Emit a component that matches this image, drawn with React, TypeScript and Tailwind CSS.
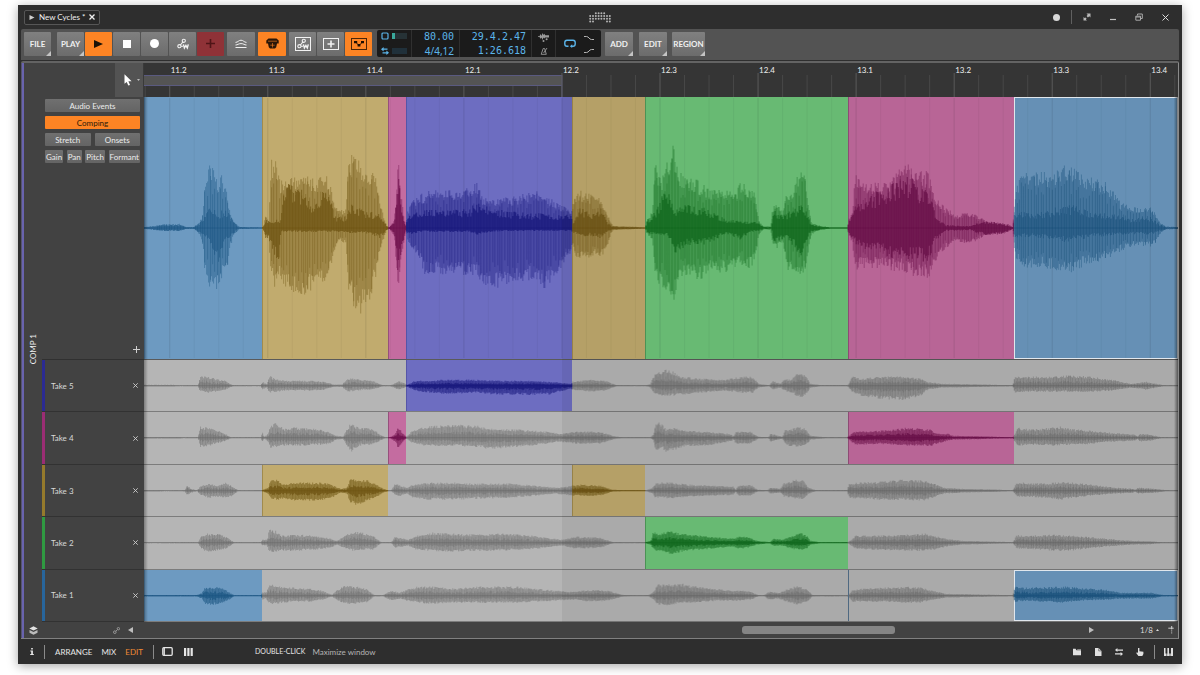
import React from "react";

type Tone = "blue" | "gold" | "pink" | "violet" | "green";
type Point = [number, number, number];

const START = 144;
const SPAN = 1033;
const EDGES = [144, 262, 388, 406, 572, 645, 847, 1013, 1177];
const MAIN_TONES: Tone[] = ["blue", "gold", "pink", "violet", "gold", "green", "pink", "blue"];

const CLIP_BG: Record<Tone, string> = {
  blue: "bg-[#6d9ac1] shadow-[inset_1px_0_#5583aa]",
  gold: "bg-[#c1ab6e] shadow-[inset_1px_0_#a18b4d]",
  pink: "bg-[#c46ca0] shadow-[inset_1px_0_#96507c]",
  violet: "bg-[#6d6dc1] shadow-[inset_1px_0_#5555a8]",
  green: "bg-[#6fc67b] shadow-[inset_1px_0_#509c5b]",
};
const INK: Record<Tone | "gray", string> = {
  blue: "#17527f",
  gold: "#6c5210",
  pink: "#6b0d49",
  violet: "#16167a",
  green: "#0f6b1c",
  gray: "#636363",
};
const CORE: Record<Tone | "gray", number> = { blue: 0.5, gold: 0.72, pink: 0.74, violet: 0.74, green: 0.74, gray: 0.36 };

// "x,up,down" triples; when down is missing the envelope is symmetric.
const parse = (s: string): Point[] =>
  s.trim().split(/\s+/).map((t) => {
    const [x, u, d] = t.split(",").map(Number);
    return [x, u, d === undefined ? u : d];
  });

const MAIN_OUTER = parse(`144,1 155,2 165,4,3 180,4,3 186,1 194,1 200,7 203,15,20 205,54,45 209,61,60 214,58,60 218,46,62 222,52,50 227,34,44 230,16,22 233,7 240,1 261,.6
263,1 266,14,12 269,6,8 270,62,48 275,74,57 279,48,44 283,46,54 290,50,64 300,50,66 310,50,62 320,48,52 325,54,54 330,44,44 334,28,28 338,16,12 346,20,15 348,64,60 354,80,80 360,66,82 370,58,68 376,52,48 380,24,22 385,6 387,1
389,.5 394,8 396,32,34 398,72,66 401,32,28 404,10,12 406,1
407,16,12 413,28,22 420,33,32 424,32,45 435,40,45 445,36,46 460,36,46 477,44,47 482,30,56 495,29,58 510,30,52 525,33,52 533,38,50 545,32,59 555,26,46 565,20,32 571,18,26
572,20,16 574,32,26 580,36,32 590,32,29 600,28,28 605,20,24 610,6,7 613,2 630,1.5 645,.6
647,9,7 652,16,12 655,68,48 658,54,54 663,50,58 668,70,68 672,84,72 676,60,64 682,50,48 690,50,47 700,44,50 712,36,42 725,40,43 735,34,39 740,46,37 750,39,39 755,33,30 758,8 763,1.5 770,2 772,20,16 777,28,20 782,14,12 785,34,28 787,30,44 793,38,40 799,60,51 805,48,40 808,22 811,5,6 820,2 830,.6 847,.6
848,8 852,15 854,54,44 860,46,38 870,46,39 880,42,38 890,48,41 900,58,41 908,62,45 918,56,48 928,54,50 934,33,33 940,24 948,18 955,12 965,15,16 975,13 985,7 1000,5,6 1008,4 1012,1
1014,34,30 1020,54,38 1032,56,38 1048,54,39 1065,62,44 1080,53,39 1092,48,34 1100,46,32 1112,40,28 1120,24,22 1130,21,18 1140,20,17 1150,21,18 1155,13,14 1160,5 1165,1.5 1177,1`);

const MAIN_INNER = parse(`144,1 165,3 180,3 186,1 194,1 203,8 210,22,15 218,14,34 225,20,14 231,11,9 238,1 261,.6
263,1 266,11,10 270,5,14 278,9,36 281,8,5 283,43,4 295,42,4 305,38,4 310,25,4 325,40,4 330,33,4 334,11,4 346,11,4 350,24,5 365,17,5 380,13,10 387,2
389,.5 394,7 396,24 398,52,46 401,24 404,8,9 406,1
407,12,7 420,17,4 440,19,4 455,18,4 470,19,4 477,26,7 490,20,4 505,17,3 530,14,3 545,14,3 550,12,3 571,13,3
572,4 580,20,8 590,14,8 600,20,10 607,6,4 612,1.5 645,.6
647,8,6 655,16,6 662,32,7 668,36,9 675,20,30 685,24,17 695,21,16 705,20,16 715,14,12 725,9,5 740,7,12 750,6,4 757,6,3 763,1 771,1 773,17,14 780,14,12 785,14,8 800,22,28 806,16,12 810,4 818,2 830,.6 847,.6
848,6 855,22,17 865,28,22 880,38,22 890,43,31 905,54,32 920,38,32 928,38,32 935,12 945,3 970,2 976,5 985,7 1000,5,6 1012,1
1014,17,9 1030,14,9 1050,17,11 1062,24,14 1080,20,12 1092,16,9 1110,14,7 1130,9,6 1150,11,7 1158,4 1165,1 1177,1`);

const TAKES: { name: string; bar: string; lit: Partial<Record<number, Tone>>; wave: Point[] }[] = [
  {
    name: "Take 5", bar: "bg-[#2b2b93]", lit: { 3: "violet" },
    wave: parse(`144,.9 174,.9 175,.5 198,.6 200,9,6 208,9,7 215,7,6 225,5,4 233,.6 261,.5 262,4 267,2 269,10,7 275,7,6 285,5,5 310,5,5 325,4 333,1.2 342,1.2 347,7,6 355,8,5 363,6,4 372,5,4 382,.8 390,.5 394,2 398,5,4 405,2 407,1 415,5,5 430,5,7 445,6,8 475,6,7 500,5,9 530,5,9 548,4,9 560,3,6 571,2,3 572,4 592,6 605,5 616,.6 646,.5 650,2 653,10,8 663,16,10 672,14,10 680,9 700,7 725,6,5 740,9,7 752,9,7 758,2 769,.6 772,5,4 780,2 784,7,5 790,6,7 798,13,11 804,11,11 810,2 820,.6 847,.6 848,2 852,10,7 860,7,10 880,9,13 903,9,14 920,7,10 927,4 940,2 970,1.5 1012,.6 1014,9,7 1025,9,6 1045,9,6 1070,10,6 1090,9,6 1110,6,5 1130,2 1145,4 1155,2 1163,.6 1177,.6`),
  },
  {
    name: "Take 4", bar: "bg-[#9b2d74]", lit: { 2: "pink", 6: "pink" },
    wave: parse(`144,.8 180,.8 182,.5 198,.6 200,11,9 207,10,9 215,8,6 223,5,4 231,.6 261,.6 262,6,5 264,1 268,4,4 270,13,10 276,14,9 284,9,8 295,10,8 320,9,7 330,5,6 336,2 343,1.2 346,7,7 351,15,14 356,11,11 362,10,7 372,9,7 380,3 385,.6 390,.6 395,4 398,11,10 402,5 406,1 412,7,5 425,11,8 450,13,8 475,12,9 490,9,11 520,8,9 545,6,6 560,4,4 576,6,6 600,6,6 612,2 620,.6 650,.6 653,3 655,16,13 661,14,10 666,8,14 675,10,12 685,7,8 705,6,8 728,4 732,3 733,1 735,6 750,6,6 758,1 768,.6 770,4 782,1 784,8,6 790,8,9 797,11,9 804,9,9 810,2 825,.6 847,.6 852,5,5 855,6,7 880,7,6 908,10,8 930,8,8 936,4,6 947,4,3 952,2 980,1.4 1012,.6 1015,6,6 1017,10,8 1030,8,7 1062,11,8 1075,8,7 1090,7,6 1110,5,4 1135,3 1136,1 1139,4 1150,3 1160,.6 1177,.6`),
  },
  {
    name: "Take 3", bar: "bg-[#957a2c]", lit: { 1: "gold", 4: "gold" },
    wave: parse(`144,.8 162,.8 164,.5 182,.6 185,1 187,6,5 191,2 197,.6 201,5,5 209,7,7 218,5,6 226,8,7 233,4,5 238,.6 262,.6 268,3 271,12,9 278,11,9 283,7,8 295,8,10 310,8,10 325,8,9 334,5,6 340,2 347,3 350,13,12 357,11,14 368,10,10 377,6,6 383,2 388,.6 391,.6 395,7,4 398,6,6 404,4 407,3 412,6,7 430,8,9 455,8,9 475,7,8 510,7,7 535,5,5 555,3 565,4 572,5 580,6,5 600,5,5 612,1 622,.6 646,.6 652,3 655,7,7 664,9,7 672,8,8 690,6,6 715,5,5 733,4 735,1 738,5 750,6,5 757,1 767,.6 770,3 780,2 783,8,6 797,11,8 803,10,8 808,3 815,.6 847,.6 848,7 855,8,8 880,9,9 903,11,9 925,10,10 934,7,6 943,3 960,2 985,1.5 1012,.6 1016,8,6 1022,8,6 1045,7,7 1060,9,9 1072,8,7 1090,6,5 1115,3 1133,2 1134,1 1137,3 1155,2 1165,.6 1177,.6`),
  },
  {
    name: "Take 2", bar: "bg-[#2f9a41]", lit: { 5: "green" },
    wave: parse(`144,.5 198,.6 201,6,6 207,9,9 217,9,8 226,6,6 234,.6 261,.6 262,3 267,3 269,13,9 275,12,9 282,7,8 295,8,8 315,7,7 330,4,5 337,2 343,6,5 352,11,8 362,10,7 373,7,7 381,.6 391,.6 395,6,5 404,4 408,3 416,7,7 433,10,8 450,9,9 475,8,8 500,9,8 525,8,7 545,5,5 562,3 575,6 600,5 613,.6 630,.5 645,.6 650,2 653,11,7 660,9,9 670,12,12 680,9,9 700,7,7 720,5 733,4 738,6 748,6,5 756,2 769,.6 773,4,3 782,3 790,6,6 799,10,7 805,8,7 810,2 820,.6 847,.6 852,4 855,7,6 875,7,7 903,8,8 925,9,8 933,7,7 945,4 960,2 980,1.5 1012,.6 1016,8,6 1025,7,6 1055,8,8 1068,7,8 1085,6,6 1105,4 1130,2 1150,1.5 1160,.6 1177,.6`),
  },
  {
    name: "Take 1", bar: "bg-[#28659b]", lit: { 0: "blue", 7: "blue" },
    wave: parse(`144,.8 197,.8 202,3,3 205,9,8 213,9,9 222,8,8 228,4,5 234,.6 261,.6 262,4 266,3 269,11,8 277,10,8 290,8,6 310,7,6 322,5,4 332,1 336,5,4 344,10,8 356,9,8 366,7,7 374,.8 383,.6 388,4 393,5 399,3 407,6,5 418,9,7 430,9,8 455,7,7 480,9,7 515,9,7 535,7,6 555,5 572,4 592,6 608,5 622,1 630,.6 648,.6 653,4 657,11,9 665,11,10 680,12,7 695,9,7 715,7,5 730,5 740,5,5 750,4 758,.6 764,.6 768,4 778,3 786,6,6 797,10,9 805,7,7 812,.8 847,.6 852,6 860,7,6 880,8,6 905,9,7 920,8,7 932,5,4 945,2 970,1.5 1012,.6 1014,9,6 1025,8,5 1063,9,7 1080,8,5 1105,6,4 1120,3 1135,3 1150,3 1162,.8 1177,.6`),
  },
];

const noise = (n: number) => {
  const v = Math.sin(n * 127.1 + 311.7) * 43758.5453;
  return v - Math.floor(v);
};

function sample(points: Point[], x: number): [number, number] {
  if (x <= points[0][0]) return [points[0][1], points[0][2]];
  for (let i = 1; i < points.length; i++) {
    if (x <= points[i][0]) {
      const [x0, u0, d0] = points[i - 1];
      const [x1, u1, d1] = points[i];
      const t = x1 === x0 ? 1 : (x - x0) / (x1 - x0);
      return [u0 + (u1 - u0) * t, d0 + (d1 - d0) * t];
    }
  }
  const last = points[points.length - 1];
  return [last[1], last[2]];
}

function body(points: Point[], from: number, to: number, mid: number, rough: number, seed: number, gain = 1) {
  const top: string[] = [];
  const bottom: string[] = [];
  for (let x = from; x < to; x++) {
    const [u, d] = sample(points, x + 0.5);
    const a = u * gain * (1 - rough * noise(x + seed));
    const b = d * gain * (1 - rough * noise(x * 1.7 + seed + 9));
    const l = x - START;
    top.push(`L${l} ${(mid - a).toFixed(1)}L${l + 1} ${(mid - a).toFixed(1)}`);
    bottom.push(`L${l + 1} ${(mid + b).toFixed(1)}L${l} ${(mid + b).toFixed(1)}`);
  }
  return `M${from - START} ${mid}${top.join("")}${bottom.reverse().join("")}Z`;
}

function stripes(points: Point[], from: number, to: number, mid: number, seed: number) {
  let d = "";
  for (let x = from; x < to; x += noise(x + seed) > 0.35 ? 3 : 2) {
    const [u, w] = sample(points, x + 0.5);
    if (u < 2) continue;
    const l = x - START + 0.5;
    const k = 0.55 + 0.42 * noise(x * 3 + seed);
    d += `M${l} ${(mid - u * k).toFixed(1)}V${(mid + w * (k + 0.03)).toFixed(1)}`;
  }
  return d;
}

function Waves({ outer, inner, tones, height, seed }: {
  outer: Point[]; inner?: Point[]; tones: (Tone | "gray")[]; height: number; seed: number;
}) {
  const mid = height / 2;
  return (
    <svg className="pointer-events-none absolute inset-0 h-full w-full" viewBox={`0 0 ${SPAN} ${height}`} preserveAspectRatio="none" aria-hidden="true">
      {tones.map((tone, i) => {
        const a = EDGES[i];
        const b = EDGES[i + 1];
        const soft = tone === "gray" ? 0.4 : inner ? 0.4 : 0.52;
        return (
          <g key={i} fill={INK[tone]} stroke="none">
            <path d={body(outer, a, b, mid, inner ? 0.3 : 0.26, seed, 1.05)} opacity={soft} />
            <path d={stripes(outer, a, b, mid, seed)} fill="none" stroke={INK[tone]} strokeWidth={1} opacity={inner ? 0.34 : 0.24} />
            <path
              d={inner ? body(inner, a, b, mid, 0.45, seed + 50, 1.05) : body(outer, a, b, mid, 0.5, seed + 50, 0.5)}
              opacity={inner || tone !== "blue" ? CORE[tone] : 0.62}
            />
            <path d={`M${a - START} ${mid}H${b - START}`} stroke={INK[tone]} strokeWidth={0.8} opacity={0.6} />
          </g>
        );
      })}
    </svg>
  );
}

const BEATS = ["11.2", "11.3", "11.4", "12.1", "12.2", "12.3", "12.4", "13.1", "13.2", "13.3", "13.4"];
const TICKS = Array.from({ length: 43 }, (_, i) => ({ x: 25.7 + (i - 1) * 24.49, beat: (i - 1) % 4 === 0 }));
const LOOP_END = 417.5;

const TOOL = "relative flex h-6 shrink-0 items-center justify-center rounded-[1px] bg-gradient-to-b from-[#808080] to-[#6c6c6c] text-[8px] font-bold leading-none text-[#f0f0f0]";
const HOT = "relative flex h-6 shrink-0 items-center justify-center rounded-[1px] bg-[#fd8424] text-[#1c1c1c]";
const SMALL = "flex h-[13px] items-center justify-center rounded-[1px] bg-gradient-to-b from-[#707070] to-[#646464] text-[8px] leading-none text-[#ececec]";

const Corner = () => (
  <svg className="absolute bottom-0 right-0 h-[5px] w-[5px]" viewBox="0 0 5 5" aria-hidden="true"><path d="M5 0V5H0Z" fill="#c4c4c4" /></svg>
);

function Automation({ boxed = false }: { boxed?: boolean }) {
  return (
    <svg className="h-4 w-4" viewBox="0 0 16 16" fill="none" stroke="#f2f2f2" aria-hidden="true">
      {boxed && <rect x=".5" y="1.5" width="15" height="13" strokeWidth="1" />}
      <g strokeWidth="1.1">
        <circle cx="4.4" cy="10.2" r="1.6" />
        <circle cx="8.8" cy="4.8" r="1.6" />
        <path d="M5.4 9 7.8 6.2M6 10.2 8 10.2" />
        <path d="M8.4 8.4 9.4 12 10.9 9.4 12.3 12 13.3 8.4" strokeWidth="1.4" />
      </g>
    </svg>
  );
}

function TitleBar() {
  const dots = ["..xxxx..", "xxxxxxxx", "xxxxxxxx", "xx....xx"];
  return (
    <header className="grid h-6 shrink-0 grid-cols-3 items-center px-[6px]">
      <div className="flex">
        <div className="flex h-[15px] items-center gap-1 rounded-[2px] border border-[#565656] bg-[#282828] px-1">
          <svg className="h-[5px] w-[6px]" viewBox="0 0 6 5" aria-hidden="true"><path d="M.5 0 5.5 2.5 .5 5Z" fill="#cfcfcf" /></svg>
          <span className="text-[8px] leading-none text-[#f0f0f0]">New Cycles *</span>
          <button aria-label="Close project" className="flex">
            <svg className="h-[6px] w-[6px]" viewBox="0 0 6 6" stroke="#f0f0f0" strokeWidth="1.3" aria-hidden="true"><path d="M.5 .5 5.5 5.5M5.5 .5 .5 5.5" /></svg>
          </button>
        </div>
      </div>
      <div className="flex justify-center">
        <svg className="h-[11px] w-[22px]" viewBox="0 0 22 11" fill="#b4b4b4" aria-hidden="true">
          {dots.flatMap((row, y) => row.split("").map((c, x) => (c === "x" ? <circle key={`${x}-${y}`} cx={1.2 + x * 2.8} cy={1.2 + y * 2.8} r="1" /> : null)))}
        </svg>
      </div>
      <div className="flex items-center justify-end gap-[11px] pr-1">
        <span className="h-[7px] w-[7px] rounded-full bg-[#d8d8d8]" />
        <span className="h-[14px] w-px bg-[#606060]" />
        <button aria-label="Toggle full screen" className="flex w-2 justify-center">
          <svg className="h-2 w-2" viewBox="0 0 8 8" fill="#b8b8b8" aria-hidden="true"><path d="M3.5 .5H7.5V4.5L6.3 3.3 4.9 4.4 3.6 3.1 4.7 1.7ZM.5 4V7.5H4L2.9 6.4 3.6 5.6 2.4 4.4 1.6 5.1Z" /></svg>
        </button>
        <button aria-label="Minimize" className="ml-1 flex w-[14px] justify-center">
          <svg className="h-2 w-2" viewBox="0 0 8 8" aria-hidden="true"><path d="M1 6.5H7" stroke="#c0c0c0" strokeWidth="1.2" /></svg>
        </button>
        <button aria-label="Restore" className="flex w-4 justify-center">
          <svg className="h-2 w-2" viewBox="0 0 8 8" fill="none" stroke="#a8a8a8" aria-hidden="true"><path d="M2.5 2.5V1H7.3V5.5H6" /><path d="M.8 3.2H5.5V7.2H.8Z" /><path d="M.8 4H5.5" /></svg>
        </button>
        <button aria-label="Close" className="flex w-[14px] justify-center">
          <svg className="h-[7px] w-[7px]" viewBox="0 0 7 7" stroke="#dcdcdc" strokeWidth="1" aria-hidden="true"><path d="M.5 .5 6.5 6.5M6.5 .5 .5 6.5" /></svg>
        </button>
      </div>
    </header>
  );
}

function Toolbar() {
  return (
    <div className="mx-[3px] flex h-[31px] shrink-0 items-center rounded-t-[2px] bg-[#535353] px-[3px] pb-[2px]">
      <button className={`${TOOL} w-[27px]`}>FILE<Corner /></button>
      <div className="ml-[6px] flex gap-px">
        <button className={`${TOOL} w-[27px]`}>PLAY<Corner /></button>
        <button aria-label="Play" className={`${HOT} w-[27px]`}><svg className="h-2 w-[9px]" viewBox="0 0 9 8" aria-hidden="true"><path d="M0 0 9 4 0 8Z" fill="#1a1208" /></svg></button>
        <button aria-label="Stop" className={`${TOOL} w-[27px]`}><span className="h-2 w-2 bg-white" /></button>
        <button aria-label="Record" className={`${TOOL} w-[27px]`}><span className="h-[9px] w-[9px] rounded-full bg-white" /></button>
        <button aria-label="Write automation" className={`${TOOL} w-[27px]`}><Automation /></button>
        <button aria-label="Overdub" className="flex h-6 w-[27px] items-center justify-center rounded-[1px] bg-[#8f3237]">
          <svg className="h-[9px] w-[9px]" viewBox="0 0 9 9" stroke="#4f1417" strokeWidth="1.6" aria-hidden="true"><path d="M4.5 0V9M0 4.5H9" /></svg>
        </button>
      </div>
      <button aria-label="Groove" className={`${TOOL} ml-[3px] w-7`}>
        <svg className="h-[10px] w-3" viewBox="0 0 12 10" fill="none" stroke="#f0f0f0" strokeWidth="1" aria-hidden="true"><path d="M.5 8.5H11.5M.5 6C3 6 3 4.6 6 4.6S9 6 11.5 6M.5 3.4C3 3.4 3.5 1.2 6 1.2S9 3.4 11.5 3.4" /></svg>
      </button>
      <button aria-label="Overdub launcher" className={`${HOT} ml-[3px] w-7`}>
        <svg className="h-[11px] w-[13px]" viewBox="0 0 13 11" aria-hidden="true"><path d="M2.5 .5H10.5L12.7 2.6V5.4H11L10.2 9.2 9 10.5H4L2.8 9.2 2 5.4H.3V2.6Z" fill="#2a1608" /><path d="M2 3.2H11M6.5 5V9.5M4.3 7.2H8.7" stroke="#fd8424" strokeWidth=".6" /></svg>
      </button>
      <div className="ml-[3px] flex gap-px">
        <button aria-label="Automation follow" className={`${TOOL} w-[27px]`}><Automation boxed /></button>
        <button aria-label="Insert" className={`${TOOL} w-[27px]`}>
          <svg className="h-4 w-4" viewBox="0 0 16 16" fill="none" stroke="#f2f2f2" aria-hidden="true"><rect x=".5" y="2.5" width="15" height="11" /><path d="M8 4.5V11.5M4.5 8H11.5" strokeWidth="1.6" /></svg>
        </button>
        <button aria-label="Clip automation" className={`${HOT} w-[27px]`}>
          <svg className="h-4 w-4" viewBox="0 0 16 16" fill="none" stroke="#4a2508" aria-hidden="true"><rect x=".5" y="2.5" width="15" height="11" /><path d="M4.5 6 8 9.5 11.5 6" strokeWidth="1" /><path d="M3 5H6.2V7.2H3ZM6.6 8H9.4V10.4H6.6ZM10 5H13V7.2H10Z" fill="#1c0d02" stroke="none" /></svg>
        </button>
      </div>

      <div className="ml-[5px] flex h-[27px] items-stretch divide-x divide-[#303030] rounded-[2px] bg-[#1b1b1b] text-[#5bb5ea]">
        <div className="flex w-[35px] flex-col justify-center gap-[7px] px-[4px]">
          <div className="flex items-center gap-[3px]">
            <svg className="h-2 w-2" viewBox="0 0 8 8" aria-hidden="true"><rect x="1" y="1" width="6" height="6" rx="1" fill="none" stroke="#5bb5ea" strokeWidth="1.2" /></svg>
            <span className="flex h-[6px] flex-1 bg-[#263236]"><span className="w-[3px] bg-[#3aa99c]" /></span>
          </div>
          <div className="flex items-center gap-[3px]">
            <svg className="h-2 w-2" viewBox="0 0 8 8" fill="#5bb5ea" aria-hidden="true"><path d="M0 2.2 2.6 0V1.6H6.5V2.8H2.6V4.4ZM8 5.8 5.4 3.6V5.2H1.5V6.4H5.4V8Z" /></svg>
            <span className="h-[6px] flex-1 bg-[#20303a]" />
          </div>
        </div>
        <div className="flex w-[48px] flex-col items-end justify-center pr-[5px] font-['DejaVu_Sans_Mono',monospace] text-[10px] leading-[14px]">
          <span>80.00</span>
          <span className="font-['Noto_Sans',sans-serif]">4/4,12</span>
        </div>
        <div className="flex w-[72px] flex-col items-end justify-center pr-[5px] font-['DejaVu_Sans_Mono',monospace] text-[10px] leading-[14px]">
          <span>29.4.2.47</span>
          <span>1:26.618</span>
        </div>
        <div className="flex w-6 flex-col items-center justify-center gap-[5px]">
          <svg className="h-[9px] w-[11px]" viewBox="0 0 11 9" fill="#9a9a9a" aria-hidden="true"><path d="M0 3.2H1.5L2.5 1 3.5 3 4.5 0 5.5 2 6.3 .8 7.2 2.2H11V4.4H7.2L6.3 5.4 5.4 4.5 4.5 7 3.5 4.6 2.5 5.8 1.5 4.1H0Z" /><circle cx="8.6" cy="6.2" r="1" /><circle cx="5.5" cy="8" r="1" /></svg>
          <svg className="h-2 w-2" viewBox="0 0 8 8" fill="none" stroke="#9a9a9a" aria-hidden="true"><path d="M3.2 1.5H4.6L6.3 7.3H1.2ZM3.6 6 7 1" strokeWidth=".9" /></svg>
        </div>
        <div className="flex w-[45px] items-center justify-center gap-2">
          <svg className="h-[9px] w-3" viewBox="0 0 12 9" fill="none" stroke="#5bb5ea" strokeWidth="1.4" aria-hidden="true"><path d="M4.5 7.3H3A2.3 2.3 0 0 1 .8 5V3.5A2.3 2.3 0 0 1 3 1.2H9A2.3 2.3 0 0 1 11.2 3.5V5A2.3 2.3 0 0 1 9 7.3H7.5" /><path d="M8.2 5.2 5.8 7.2 8.2 9Z" fill="#5bb5ea" stroke="none" /></svg>
          <svg className="h-5 w-[10px]" viewBox="0 0 10 20" fill="none" stroke="#b4b4b4" aria-hidden="true"><path d="M0 2.5H2.5C5 2.5 5 5.5 7.5 5.5H10M0 18.5H2.5C5 18.5 5 15.5 7.5 15.5H10" /></svg>
        </div>
      </div>

      <button className={`${TOOL} ml-1 w-7`}>ADD<Corner /></button>
      <button className={`${TOOL} ml-[6px] w-7`}>EDIT<Corner /></button>
      <button className={`${TOOL} ml-[5px] w-[33px]`}>REGION<Corner /></button>
    </div>
  );
}

function TrackHeaders() {
  return (
    <div className="flex w-[102px] shrink-0 flex-col">
      <div className="flex h-[34px] shrink-0 justify-end">
        <button aria-label="Pointer tool" className="flex w-[29px] items-center justify-end gap-[5px] border-r border-[#3a3a3a] bg-[#535353] pr-[3px]">
          <svg className="h-3 w-2" viewBox="0 0 8 12" aria-hidden="true"><path d="M.5 .3V9.8L2.7 7.9 4.3 11.6 6 10.9 4.4 7.3H7.6Z" fill="#fff" /></svg>
          <svg className="h-[2px] w-[3px]" viewBox="0 0 3 2" aria-hidden="true"><path d="M0 0H3L1.5 2Z" fill="#bbb" /></svg>
        </button>
      </div>
      <div className="flex min-h-0 flex-1 basis-0 flex-col border-b border-[#303030]">
        <div className="flex flex-col gap-[4px] pl-[3px] pr-[4px] pt-[2px]">
          <button className={SMALL}>Audio Events</button>
          <button className="flex h-[13px] items-center justify-center rounded-[1px] bg-[#fd8424] text-[8px] leading-none text-[#2c1a08]">Comping</button>
          <div className="grid grid-cols-2 gap-[4px]">
            <button className={SMALL}>Stretch</button>
            <button className={SMALL}>Onsets</button>
          </div>
          <div className="flex justify-between">
            <button className={`${SMALL} px-px`}>Gain</button>
            <button className={`${SMALL} px-px`}>Pan</button>
            <button className={`${SMALL} px-px`}>Pitch</button>
            <button className={`${SMALL} px-px`}>Formant</button>
          </div>
        </div>
        <button aria-label="Add take" className="mb-[6px] mr-[4px] mt-auto self-end">
          <svg className="h-[7px] w-[7px]" viewBox="0 0 7 7" stroke="#cfcfcf" aria-hidden="true"><path d="M3.5 0V7M0 3.5H7" /></svg>
        </button>
      </div>
      <div className="flex min-h-0 flex-1 basis-0 flex-col">
        {TAKES.map((t) => (
          <div key={t.name} className="flex min-h-0 flex-1 items-center border-b border-[#323232]">
            <span className={`w-[3px] self-stretch ${t.bar}`} />
            <span className="ml-[6px] flex-1 text-[8px] leading-none text-[#d8d8d8]">{t.name}</span>
            <button aria-label={`Remove ${t.name}`} className="mr-[6px]">
              <svg className="h-[5px] w-[5px]" viewBox="0 0 5 5" stroke="#cfcfcf" strokeWidth=".9" aria-hidden="true"><path d="M.3 .3 4.7 4.7M4.7 .3 .3 4.7" /></svg>
            </button>
          </div>
        ))}
      </div>
    </div>
  );
}

function Ruler() {
  return (
    <div className="relative h-[34px] shrink-0 bg-[#353535]">
      <svg className="absolute inset-0 h-full w-full" viewBox={`0 0 ${SPAN} 34`} preserveAspectRatio="none" aria-hidden="true">
        <rect x="0" y="12" width={LOOP_END} height="11" fill="#545454" />
        <path d={`M0 12.5H${LOOP_END}V34M0 22.5H${LOOP_END}`} fill="none" stroke="#5a5a80" />
        {TICKS.map((t) => (
          <path key={t.x} d={`M${t.x} ${t.x < LOOP_END - 2 ? 23 : t.beat ? 10 : 12}V34`} stroke={t.beat ? "#5a5a5a" : "#484848"} />
        ))}
      </svg>
      <div className="relative flex overflow-hidden">
        <span className="min-w-0 basis-0" style={{ flexGrow: 25.7 }} />
        {BEATS.map((b, i) => (
          <span key={b} className="min-w-0 basis-0 whitespace-nowrap pt-[2px] text-[8px] leading-[10px] text-[#ededed]" style={{ flexGrow: i === BEATS.length - 1 ? 27.7 : 97.96 }}><span className="pl-px">{b}</span></span>
        ))}
      </div>
    </div>
  );
}

function Lane({ tones }: { tones: (Tone | null)[] }) {
  return (
    <div className="flex h-full">
      {tones.map((tone, i) => (
        <div
          key={i}
          className={`min-w-0 basis-0 ${tone ? CLIP_BG[tone] : ""} ${tone && i === 7 ? "outline outline-1 -outline-offset-1 outline-[#f0f6fc]" : ""}`}
          style={{ flexGrow: EDGES[i + 1] - EDGES[i] }}
        />
      ))}
    </div>
  );
}

function Timeline() {
  return (
    <div className="flex min-w-0 flex-1 flex-col">
      <Ruler />
      <div className="relative flex min-h-0 flex-1 flex-col overflow-hidden bg-[#b5b5b5]">
        <div className="relative min-h-0 flex-1 basis-0 border-b border-[#5a5a5a]">
          <Lane tones={MAIN_TONES} />
          <svg className="absolute inset-0 h-full w-full" viewBox={`0 0 ${SPAN} 262`} preserveAspectRatio="none" aria-hidden="true">
            {TICKS.map((t) => <path key={t.x} d={`M${t.x} 1V261`} stroke="#000" opacity={t.beat ? 0.09 : 0.035} />)}
          </svg>
          <Waves outer={MAIN_OUTER} inner={MAIN_INNER} tones={MAIN_TONES} height={262} seed={3} />
        </div>
        <div className="flex min-h-0 flex-1 basis-0 flex-col">
          {TAKES.map((t, n) => {
            const tones = MAIN_TONES.map((_, i) => t.lit[i] ?? null);
            return (
              <div key={t.name} className="relative min-h-0 flex-1 border-b border-[#7c7c7c]">
                <Lane tones={tones} />
                <Waves outer={t.wave} tones={tones.map((x) => x ?? "gray")} height={52} seed={n * 37 + 11} />
                {n === TAKES.length - 1 && (
                  <span className="absolute inset-y-0 w-px bg-[#54708a]" style={{ left: `${((EDGES[6] - START) / SPAN) * 100}%` }} />
                )}
              </div>
            );
          })}
        </div>
        <div className="pointer-events-none absolute inset-y-0 right-0 bg-black/6" style={{ left: `${(LOOP_END / SPAN) * 100}%` }} />
        <div className="pointer-events-none absolute inset-y-0 left-0 w-1 bg-gradient-to-r from-black/30 to-transparent" />
        <div className="pointer-events-none absolute inset-y-0 right-0 w-1 bg-gradient-to-l from-black/50 to-transparent" />
      </div>
    </div>
  );
}

function ScrollRow() {
  return (
    <div className="flex h-4 shrink-0 items-center">
      <button aria-label="Link zoom" className="ml-[71px]">
        <svg className="h-[7px] w-[7px]" viewBox="0 0 7 7" fill="none" stroke="#999" aria-hidden="true"><circle cx="1.8" cy="5.2" r="1.3" /><circle cx="5.4" cy="1.7" r="1.2" /><path d="M2.8 4.2 4.5 2.6" /></svg>
      </button>
      <button aria-label="Scroll left" className="ml-2"><svg className="h-[6px] w-[5px]" viewBox="0 0 5 6" aria-hidden="true"><path d="M5 0V6L0 3Z" fill="#bdbdbd" /></svg></button>
      <div role="scrollbar" aria-label="Timeline position" aria-controls="timeline" aria-valuenow={74} aria-valuemin={0} aria-valuemax={100} className="flex h-2 min-w-0 flex-1">
        <span className="flex-[609]" />
        <span className="flex-[153] rounded-[3px] bg-[#858585]" />
        <span className="flex-[194]" />
      </div>
      <button aria-label="Scroll right"><svg className="h-[6px] w-[5px]" viewBox="0 0 5 6" aria-hidden="true"><path d="M0 0V6L5 3Z" fill="#bdbdbd" /></svg></button>
      <button className="ml-[46px] flex items-center gap-[3px] text-[8px] leading-none text-[#dcdcdc]">
        1/8
        <svg className="h-[2px] w-[3px]" viewBox="0 0 3 2" aria-hidden="true"><path d="M0 2H3L1.5 0Z" fill="#dcdcdc" /></svg>
      </button>
      <button aria-label="Snap" className="ml-[9px] mr-[4px]">
        <svg className="h-2 w-[6px]" viewBox="0 0 6 8" stroke="#d0d0d0" fill="none" aria-hidden="true"><path d="M.3 2.2H5.7M3.7 0V3" /><path d="M3.7 3.6V8" strokeDasharray="1 1" /></svg>
      </button>
    </div>
  );
}

function Footer() {
  return (
    <footer className="flex h-[25px] shrink-0 items-center px-[9px] text-[8px] leading-none text-[#e6e6e6]">
      <button aria-label="Info" className="flex w-[10px] justify-center">
        <svg className="h-[7px] w-[4px]" viewBox="0 0 4 7" fill="#e6e6e6" aria-hidden="true"><path d="M1.2 0H2.8V1.5H1.2ZM.3 2.4H2.9V6H3.8V7H.2V6H1.2V3.4H.3Z" /></svg>
      </button>
      <span className="ml-[7px] h-[14px] w-px bg-[#8a8a8a]" />
      <button className="ml-[10px]">ARRANGE</button>
      <button className="ml-[9px]">MIX</button>
      <button className="ml-[9px] text-[#f08a35]">EDIT</button>
      <span className="ml-[10px] h-[14px] w-px bg-[#8a8a8a]" />
      <button aria-label="Single panel" className="ml-2">
        <svg className="h-[9px] w-[11px]" viewBox="0 0 11 9" fill="none" aria-hidden="true"><rect x=".8" y=".7" width="9.4" height="7.6" rx="1" stroke="#e6e6e6" strokeWidth="1.3" /><path d="M2.2 .8V8.2" stroke="#e6e6e6" strokeWidth="1.4" /></svg>
      </button>
      <button aria-label="Columns" className="ml-[11px]">
        <svg className="h-2 w-[9px]" viewBox="0 0 9 8" fill="#e6e6e6" aria-hidden="true"><path d="M0 0H2.2V8H0ZM3.3 0H5.5V8H3.3ZM6.6 0H8.8V8H6.6Z" /></svg>
      </button>
      <span className="ml-[62px] text-[7px]">DOUBLE-CLICK</span>
      <span className="ml-[7px] text-[#b4b4b4]">Maximize window</span>
      <div className="ml-auto flex items-center gap-[13px]">
        <button aria-label="Browser"><svg className="h-2 w-2" viewBox="0 0 8 8" aria-hidden="true"><path d="M0 .8H2.6L3.4 2.2H8V7.2H0Z" fill="#e0e0e0" /><path d="M4 .9H8V1.6H4.4Z" fill="#e0e0e0" /></svg></button>
        <button aria-label="Project"><svg className="h-2 w-2" viewBox="0 0 8 8" aria-hidden="true"><path d="M1 0H4.6L7.5 2.9V8H1Z" fill="#e0e0e0" /><path d="M4.7 .2V2.9H7.4" stroke="#2e2e2e" strokeWidth=".5" fill="none" /></svg></button>
        <button aria-label="Mappings"><svg className="h-2 w-2" viewBox="0 0 8 8" fill="#e0e0e0" aria-hidden="true"><path d="M0 2 2.4 0V1.4H8V2.7H2.4V4ZM8 5.9 5.6 3.9V5.3H0V6.6H5.6V8Z" /></svg></button>
        <button aria-label="Touch"><svg className="h-2 w-2" viewBox="0 0 8 8" aria-hidden="true"><path d="M2 0H3.4V3.2L7.4 3.8V6L6.3 8H2.4L.2 4.9 1 4.2 2 4.9Z" fill="#e0e0e0" /></svg></button>
        <span className="-ml-[3px] -mr-1 h-[14px] w-px bg-[#8a8a8a]" />
        <button aria-label="Keyboard"><svg className="h-2 w-[9px]" viewBox="0 0 9 8" aria-hidden="true"><path d="M0 0H1.5V5.5H3.4V0H5V5.5H7V0H9V8H0Z" fill="#e0e0e0" /><path d="M2.7 5V8M6 5V8" stroke="#2e2e2e" strokeWidth=".6" /></svg></button>
      </div>
    </footer>
  );
}

export default function App() {
  return (
    <div className="flex min-h-screen flex-col bg-white px-[18px] pb-[11px] pt-[5px] font-['Lato',sans-serif]">
      <div className="flex flex-1 flex-col bg-[#2e2e2e] shadow-[0_2px_10px_rgba(0,0,0,0.35)]">
        <TitleBar />
        <Toolbar />
        <main id="timeline" className="mx-[3px] mt-px flex min-h-[420px] flex-1 rounded-t-[2px] border-b border-r border-t-2 border-b-[#808080] border-r-[#8a8a8a] border-t-[#636363] bg-[#424242]">
          <div className="w-[3px] border-l border-[#55556e] bg-[#6963ae]" />
          <div className="relative flex min-w-0 flex-1 flex-col">
            <div className="flex min-h-0 flex-1">
              <div className="w-[18px] shrink-0" />
              <TrackHeaders />
              <Timeline />
            </div>
            <div className="flex">
              <div className="w-[18px] shrink-0" />
              <div className="min-w-0 flex-1"><ScrollRow /></div>
            </div>
            <div className="absolute inset-y-0 left-0 flex w-[18px] flex-col items-center">
              <span className="flex-1" />
              <span className="rotate-180 text-[8px] leading-none text-[#f0f0f0] [writing-mode:vertical-rl]">COMP 1</span>
              <span className="flex flex-1 items-end pb-[3px]">
                <svg className="h-[9px] w-[9px]" viewBox="0 0 9 9" aria-hidden="true"><path d="M4.5 .3 8.7 2.4 4.5 4.5 .3 2.4Z" fill="#e2e2e2" /><path d="M.5 4 4.5 6 8.5 4V6.8L4.5 8.8 .5 6.8Z" fill="#bcbcbc" /></svg>
              </span>
            </div>
          </div>
        </main>
        <Footer />
      </div>
    </div>
  );
}
